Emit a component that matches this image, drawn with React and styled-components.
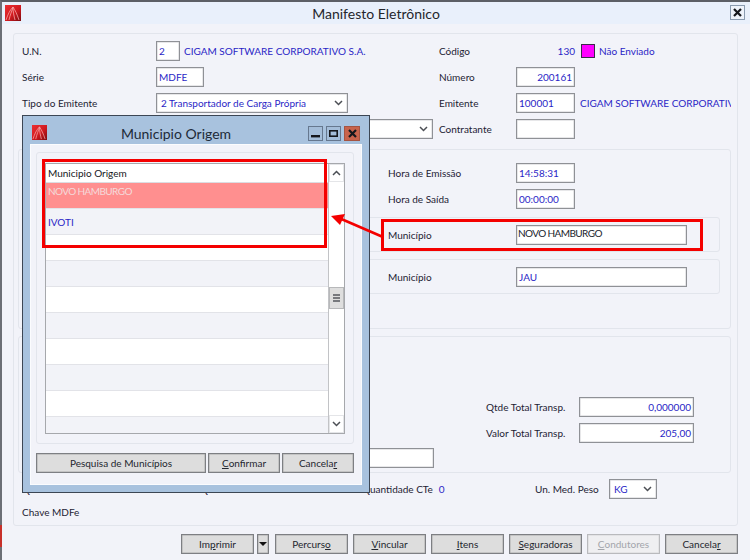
import { createGlobalStyle, styled } from "styled-components";

const FONT = `Lato, "Noto Sans", "DejaVu Sans", sans-serif`;
const BLUE = "#2a1fc6";
const INK = "#1d2233";

const GlobalStyle = createGlobalStyle`
  html, body {
    margin: 0;
    padding: 0;
    overflow: hidden;
    background: #f2f3f9;
  }
`;

const Stage = styled.div`
  position: relative;
  width: 750px;
  height: 560px;
  overflow: hidden;
  font-family: ${FONT};
  font-size: 10px;
  color: ${INK};
`;

const Window = styled.div`
  box-sizing: border-box;
  width: 750px;
  height: 560px;
  background: #f2f3f9;
  border-top: 2px solid #5c5f66;
  border-left: 2px solid #6c6f76;
`;

const TitleBar = styled.div`
  position: relative;
  display: flex;
  align-items: center;
  justify-content: center;
  height: 22px;
  background: #e9f0fb;
  font-size: 14px;
  color: #24262c;
`;

const TitleLogo = styled.span`
  position: absolute;
  left: 3px;
  top: 3px;
  display: flex;
`;

const CloseBox = styled.span`
  position: absolute;
  right: 5px;
  top: 3px;
  display: flex;
  align-items: center;
  justify-content: center;
  width: 15px;
  height: 15px;
  box-sizing: border-box;
  border: 1px solid #8a9bb0;
  background: #eef3fb;
`;

const Body = styled.div`
  padding: 9px 12px 0 11px;
`;

const Panel = styled.div`
  box-sizing: border-box;
  height: 493px;
  padding: 7px 6px 0 8px;
  border: 1px solid #e2e5ec;
  border-radius: 3px;
`;

const TopGrid = styled.div`
  display: grid;
  grid-template-columns: 134px 283px 77px minmax(0, 1fr);
  grid-auto-rows: 20px;
  row-gap: 6px;
  align-items: center;
`;

const Label = styled.span`
  white-space: nowrap;
`;

const Cell = styled.div`
  display: flex;
  align-items: center;
  min-width: 0;
  overflow: hidden;
  height: 20px;
  gap: ${(p) => p.$gap || 0}px;
`;

const Field = styled.div`
  box-sizing: border-box;
  flex: none;
  width: ${(p) => p.$w}px;
  height: 20px;
  padding: ${(p) => (p.$top ? "0 1px 4px" : "0 2px")};
  display: flex;
  align-items: center;
  justify-content: ${(p) => (p.$right ? "flex-end" : "flex-start")};
  background: #fff;
  border: 1px solid #8f9196;
  box-shadow: inset 0 0 0 0.5px #cfd0d4;
  color: ${(p) => (p.$dark ? "#20232c" : BLUE)};
  letter-spacing: ${(p) => (p.$dark ? "-0.6px" : "normal")};
  white-space: nowrap;
`;

const Select = styled(Field)`
  justify-content: space-between;
  padding: 0 4px 0 4px;
`;

const BlueText = styled.span`
  flex: none;
  color: ${BLUE};
  white-space: nowrap;
`;

const CodeValue = styled(BlueText)`
  width: 59px;
  text-align: right;
`;

const StatusText = styled(BlueText)`
  margin-left: -2px;
`;

const StatusSwatch = styled.span`
  flex: none;
  width: 14px;
  height: 14px;
  box-sizing: border-box;
  background: #ff00ff;
  border: 1px solid #3a2a4a;
`;

const SubPanel = styled.div`
  box-sizing: border-box;
  margin: ${(p) => p.$top}px 0 0 -4px;
  height: ${(p) => p.$h}px;
  padding-top: ${(p) => p.$pad}px;
  border: 1px solid #e2e5ec;
  border-radius: 3px;
`;

const TimeRows = styled.div`
  display: grid;
  grid-template-columns: 128px auto;
  grid-auto-rows: 20px;
  row-gap: 6px;
  align-items: center;
  padding-left: 369px;
`;

const CityGroup = styled.div`
  box-sizing: border-box;
  display: grid;
  grid-template-columns: 128px auto;
  align-items: center;
  margin: ${(p) => p.$top}px 10px 0 11px;
  padding: 7px 0 6px 357px;
  border: 1px solid #e2e5ec;
  border-radius: 3px;
`;

const TotalRow = styled.div`
  display: grid;
  grid-template-columns: 93px 115px;
  justify-content: end;
  align-items: center;
  height: 20px;
  margin-bottom: 6px;
  padding-right: 36px;
`;

const WideFieldRow = styled.div`
  margin: -1px 0 0 131px;
`;

const InfoRow = styled.div`
  display: grid;
  grid-template-columns: 178px 162px 173px 74px auto;
  align-items: center;
  height: 20px;
  margin-top: 6px;
`;

const NoteRow = styled.div`
  display: flex;
  align-items: center;
  height: 20px;
  margin-top: 3px;
`;

const ActionBar = styled.div`
  display: flex;
  justify-content: flex-end;
  margin-top: 8px;
  gap: 5px;
`;

const Button = styled.div`
  box-sizing: border-box;
  flex: ${(p) => (p.$grow ? "1" : "none")};
  width: ${(p) => p.$w || 73}px;
  height: 20px;
  display: flex;
  align-items: center;
  justify-content: center;
  background: ${(p) => (p.$off ? "#efeff1" : "#dddddd")};
  border: 1px solid ${(p) => (p.$off ? "#b9babd" : "#7d7f83")};
  box-shadow: inset 0 0 0 0.5px ${(p) => (p.$off ? "#d8d8da" : "#ababab")};
  color: ${(p) => (p.$off ? "#a3a5ab" : "#23262e")};
  white-space: nowrap;
`;

const SplitCaret = styled(Button)`
  width: 12px;
  margin: 0 1px 0 -2px;
`;

/* the dialog floats over the form */
const Dialog = styled.div`
  position: absolute;
  left: 22px;
  top: 115px;
  box-sizing: border-box;
  width: 348px;
  height: 378px;
  padding: 0 7px 7px;
  display: flex;
  flex-direction: column;
  background: #a8c2de;
  border: 1px solid #3c4654;
`;

const DialogHead = styled.div`
  position: relative;
  flex: none;
  height: 28px;
  display: flex;
  align-items: center;
  justify-content: center;
  padding: 6px 40px 0 0;
  box-sizing: border-box;
  font-size: 14px;
  color: #202a38;
`;

const DialogLogo = styled.span`
  position: absolute;
  left: 2px;
  top: 9px;
  display: flex;
`;

const HeadButtons = styled.div`
  position: absolute;
  right: 2px;
  top: 10px;
  display: flex;
  gap: 3px;
`;

const HeadButton = styled.span`
  box-sizing: border-box;
  width: ${(p) => (p.$close ? 16 : 15)}px;
  height: 15px;
  display: flex;
  align-items: center;
  justify-content: center;
  background: ${(p) => (p.$close ? "#c8634c" : "#a4bdd9")};
  border: 1px solid ${(p) => (p.$close ? "#a55442" : "#66788f")};
`;

const DialogBody = styled.div`
  flex: 1;
  min-height: 0;
  padding: 8px 8px 0 6px;
  background: #f2f3f9;
  box-shadow: inset 0 0 0 1px #fbfcfe;
`;

const ListGroup = styled.div`
  box-sizing: border-box;
  height: 292px;
  padding: 10px 8px 9px;
  border: 1px solid #e2e5ec;
  border-radius: 3px;
`;

const Table = styled.div`
  box-sizing: border-box;
  height: 271px;
  display: flex;
  background: #fff;
  border: 1px solid #a6a8ac;
`;

const TableMain = styled.div`
  flex: 1;
  min-width: 0;
  overflow: hidden;
`;

const TableHead = styled.div`
  box-sizing: border-box;
  height: 19px;
  padding-left: 2px;
  display: flex;
  align-items: center;
  color: #15171c;
  border-bottom: 1px solid #dcdde2;
`;

const TableRow = styled.div`
  box-sizing: border-box;
  height: 26px;
  padding: ${(p) => (p.$picked ? "1px 2px 0" : "6px 2px 0")};
  line-height: 14px;
  background: ${(p) => (p.$picked ? "#ff8f8f" : p.$even ? "#f2f3f8" : "#fff")};
  border-bottom: 1px solid #e2e3e8;
  color: ${(p) => (p.$picked ? "#f4dada" : BLUE)};
  letter-spacing: ${(p) => (p.$picked ? "-0.6px" : "normal")};
  white-space: nowrap;
`;

const Scrollbar = styled.div`
  flex: none;
  box-sizing: border-box;
  width: 16px;
  display: flex;
  flex-direction: column;
  border-left: 1px solid #c2c3c6;
`;

const ScrollEnd = styled.div`
  flex: none;
  height: 16px;
  display: flex;
  align-items: center;
  justify-content: center;
  border: 1px solid #e4e5e8;
`;

const ScrollTrack = styled.div`
  flex: 1;
`;

const ScrollThumb = styled.div`
  box-sizing: border-box;
  margin-top: 105px;
  height: 22px;
  display: flex;
  flex-direction: column;
  align-items: center;
  justify-content: center;
  gap: 1px;
  background: #dedede;
  border: 1px solid #b7b8ba;
`;

const GripLine = styled.span`
  width: 7px;
  height: 2px;
  background: #77797d;
`;

const DialogActions = styled.div`
  display: flex;
  gap: 2px;
  margin-top: 9px;
`;

/* annotations drawn on top of the screenshot */
const Callout = styled.div`
  position: absolute;
  left: ${(p) => p.$x}px;
  top: ${(p) => p.$y}px;
  width: ${(p) => p.$w}px;
  height: ${(p) => p.$h}px;
  box-sizing: border-box;
  border: 3px solid #f40000;
`;

const ArrowLayer = styled.svg`
  position: absolute;
  left: 325px;
  top: 205px;
`;

const EdgeMark = styled.span`
  position: absolute;
  left: 0;
  top: 525px;
  width: 2px;
  height: 22px;
  background: #c8302a;
`;

function Logo({ size = 16, id }) {
  return (
    <svg width={size} height={size} viewBox="0 0 16 16">
      <defs>
        <linearGradient id={id} x1="0" y1="0" x2="1" y2="1">
          <stop offset="0" stopColor="#ec2f32" />
          <stop offset="0.55" stopColor="#d01a20" />
          <stop offset="1" stopColor="#7c0a10" />
        </linearGradient>
      </defs>
      <rect width="16" height="16" fill={`url(#${id})`} />
      <path
        d="M1 15 C3 9 5 5 8 2 M4 15 C5 10 7 6 8 2 C10 5 12 9 14 15 M8 2 C8 7 9 11 10 15"
        fill="none"
        stroke="#f6a6a6"
        strokeWidth="0.8"
      />
    </svg>
  );
}

function Chevron({ up }) {
  return (
    <svg width="9" height="6" viewBox="0 0 9 6">
      <path
        d={up ? "M1 5 L4.5 1.5 L8 5" : "M1 1 L4.5 4.5 L8 1"}
        fill="none"
        stroke="#4c4f55"
        strokeWidth="1.5"
      />
    </svg>
  );
}

function CloseGlyph() {
  return (
    <svg width="9" height="9" viewBox="0 0 9 9">
      <path d="M1 1 L8 8 M8 1 L1 8" stroke="#15171c" strokeWidth="2.2" />
    </svg>
  );
}

const LIST_ROWS = ["IVOTI", "", "", "", "", "", "", "", ""];

export default function App() {
  return (
    <Stage>
      <GlobalStyle />
      <Window>
        <TitleBar>
          <TitleLogo>
            <Logo id="logo-main" />
          </TitleLogo>
          Manifesto Eletrônico
          <CloseBox>
            <CloseGlyph />
          </CloseBox>
        </TitleBar>
        <Body>
          <Panel>
            <TopGrid>
              <Label>U.N.</Label>
              <Cell $gap={4}>
                <Field $w={24}>2</Field>
                <BlueText>CIGAM SOFTWARE CORPORATIVO S.A.</BlueText>
              </Cell>
              <Label>Código</Label>
              <Cell $gap={6}>
                <CodeValue>130</CodeValue>
                <StatusSwatch />
                <StatusText>Não Enviado</StatusText>
              </Cell>

              <Label>Série</Label>
              <Cell>
                <Field $w={48}>MDFE</Field>
              </Cell>
              <Label>Número</Label>
              <Cell>
                <Field $w={59} $right>
                  200161
                </Field>
              </Cell>

              <Label>Tipo do Emitente</Label>
              <Cell>
                <Select $w={192}>
                  2 Transportador de Carga Própria
                  <Chevron />
                </Select>
              </Cell>
              <Label>Emitente</Label>
              <Cell $gap={5}>
                <Field $w={59}>100001</Field>
                <BlueText>CIGAM SOFTWARE CORPORATIVO S.A.</BlueText>
              </Cell>

              <span />
              <Cell>
                <Select $w={277}>
                  <span />
                  <Chevron />
                </Select>
              </Cell>
              <Label>Contratante</Label>
              <Cell>
                <Field $w={59} />
              </Cell>
            </TopGrid>

            <SubPanel $top={10} $h={180} $pad={13}>
              <TimeRows>
                <Label>Hora de Emissão</Label>
                <Field $w={59}>14:58:31</Field>
                <Label>Hora de Saída</Label>
                <Field $w={59}>00:00:00</Field>
              </TimeRows>
              <CityGroup $top={8}>
                <Label>Município</Label>
                <Field $w={171} $dark $top>
                  NOVO HAMBURGO
                </Field>
              </CityGroup>
              <CityGroup $top={7}>
                <Label>Município</Label>
                <Field $w={171}>JAU</Field>
              </CityGroup>
            </SubPanel>

            <SubPanel $top={7} $h={137} $pad={60}>
              <TotalRow>
                <Label>Qtde Total Transp.</Label>
                <Field $w={115} $right>
                  0,000000
                </Field>
              </TotalRow>
              <TotalRow>
                <Label>Valor Total Transp.</Label>
                <Field $w={115} $right>
                  205,00
                </Field>
              </TotalRow>
              <WideFieldRow>
                <Field $w={284} />
              </WideFieldRow>
            </SubPanel>

            <InfoRow>
              <Label>Q</Label>
              <Label>Q</Label>
              <Cell $gap={6}>
                <Label>Quantidade CTe</Label>
                <BlueText>0</BlueText>
              </Cell>
              <Label>Un. Med. Peso</Label>
              <Select $w={48}>
                KG
                <Chevron />
              </Select>
            </InfoRow>
            <NoteRow>
              <Label>Chave MDFe</Label>
            </NoteRow>
          </Panel>

          <ActionBar>
            <Button>
              Im<u>p</u>rimir
            </Button>
            <SplitCaret>
              <svg width="8" height="4" viewBox="0 0 8 4">
                <path d="M0 0 H8 L4 4 Z" fill="#111" />
              </svg>
            </SplitCaret>
            <Button>
              Percurs<u>o</u>
            </Button>
            <Button>
              <u>V</u>incular
            </Button>
            <Button>
              <u>I</u>tens
            </Button>
            <Button>
              <u>S</u>eguradoras
            </Button>
            <Button $off>
              <u>C</u>ondutores
            </Button>
            <Button>
              Cancela<u>r</u>
            </Button>
          </ActionBar>
        </Body>
      </Window>

      <EdgeMark />

      <Dialog>
        <DialogHead>
          <DialogLogo>
            <Logo size={15} id="logo-dialog" />
          </DialogLogo>
          Municipio Origem
          <HeadButtons>
            <HeadButton>
              <svg width="9" height="9" viewBox="0 0 9 9">
                <rect x="0" y="6" width="9" height="2.4" fill="#15171c" />
              </svg>
            </HeadButton>
            <HeadButton>
              <svg width="9" height="9" viewBox="0 0 9 9">
                <rect x="0.8" y="1.8" width="7.4" height="5.4" fill="none" stroke="#15171c" strokeWidth="1.6" />
              </svg>
            </HeadButton>
            <HeadButton $close>
              <CloseGlyph />
            </HeadButton>
          </HeadButtons>
        </DialogHead>
        <DialogBody>
          <ListGroup>
            <Table>
              <TableMain>
                <TableHead>Municipio Origem</TableHead>
                <TableRow $picked>NOVO HAMBURGO</TableRow>
                {LIST_ROWS.map((name, i) => (
                  <TableRow key={i} $even={i % 2 === 0}>
                    {name}
                  </TableRow>
                ))}
              </TableMain>
              <Scrollbar>
                <ScrollEnd>
                  <Chevron up />
                </ScrollEnd>
                <ScrollTrack>
                  <ScrollThumb>
                    <GripLine />
                    <GripLine />
                    <GripLine />
                  </ScrollThumb>
                </ScrollTrack>
                <ScrollEnd>
                  <Chevron />
                </ScrollEnd>
              </Scrollbar>
            </Table>
          </ListGroup>
          <DialogActions>
            <Button $grow>Pesquisa de Municípios</Button>
            <Button $w={72}>
              <u>C</u>onfirmar
            </Button>
            <Button $w={72}>
              Cancela<u>r</u>
            </Button>
          </DialogActions>
        </DialogBody>
      </Dialog>

      <Callout $x={42} $y={159} $w={285} $h={89} />
      <Callout $x={381} $y={219} $w={322} $h={32} />
      <ArrowLayer width="60" height="40" viewBox="0 0 60 40">
        <path d="M58 32 L14 13" stroke="#f40000" strokeWidth="2.6" />
        <path d="M6 11 L20 9 L15 20 Z" fill="#f40000" />
      </ArrowLayer>
    </Stage>
  );
}
